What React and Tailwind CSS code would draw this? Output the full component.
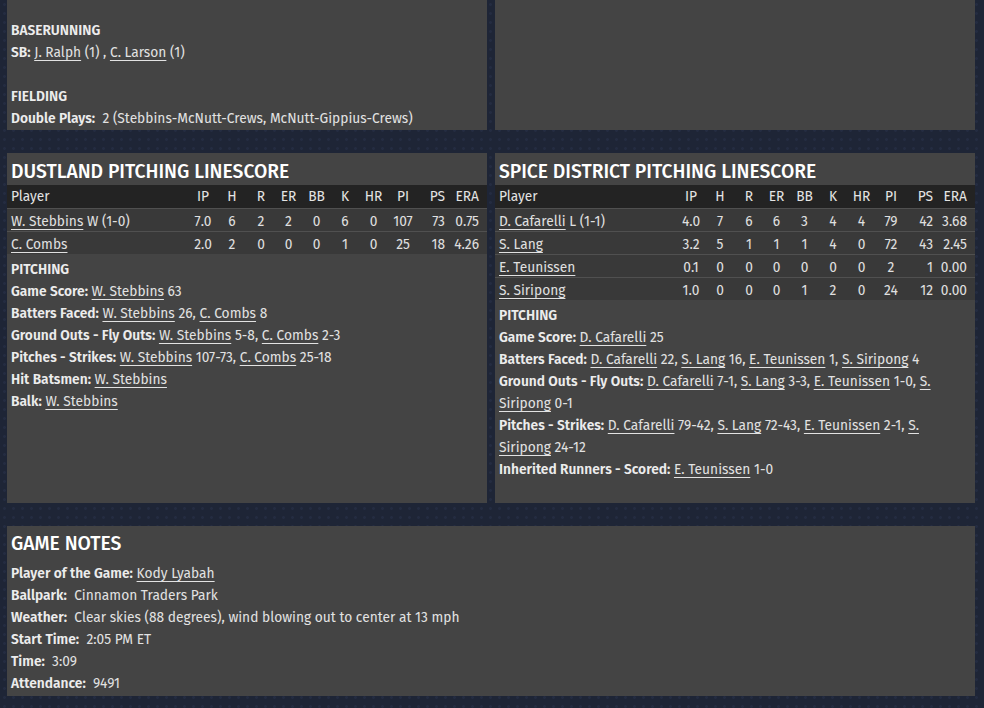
import React from 'react';

const cols = 'grid grid-cols-[1fr_28px_30px_28px_27px_29px_28px_29px_30px_29px_40px]';

const dustland = [
    { name: 'W. Stebbins', note: 'W (1-0)', s: ['7.0', '6', '2', '2', '0', '6', '0', '107', '73', '0.75'] },
    { name: 'C. Combs', note: '', s: ['2.0', '2', '0', '0', '0', '1', '0', '25', '18', '4.26'] },
];

const spice = [
    { name: 'D. Cafarelli', note: 'L (1-1)', s: ['4.0', '7', '6', '6', '3', '4', '4', '79', '42', '3.68'] },
    { name: 'S. Lang', note: '', s: ['3.2', '5', '1', '1', '1', '4', '0', '72', '43', '2.45'] },
    { name: 'E. Teunissen', note: '', s: ['0.1', '0', '0', '0', '0', '0', '0', '2', '1', '0.00'] },
    { name: 'S. Siripong', note: '', s: ['1.0', '0', '0', '0', '1', '2', '0', '24', '12', '0.00'] },
];

const heads = ['IP', 'H', 'R', 'ER', 'BB', 'K', 'HR', 'PI', 'PS', 'ERA'];

function A({ children }) {
    return <a className="underline underline-offset-[3px] decoration-1 cursor-pointer">{children}</a>;
}

function Line({ label, children }) {
    return (
        <div className="leading-[22px]">
            <span className="font-semibold text-[#ececec]">{label}</span>
            {children}
        </div>
    );
}

function cellClass(i) {
    // PS and ERA sit on the right, the rest are centered
    if (i === 8) return 'text-right pr-[2px]';
    if (i === 9) return 'text-right pr-[8px]';
    return 'text-center';
}

function Linescore({ title, rows, children }) {
    return (
        <div className="bg-[#444444] h-[350px] flex flex-col">
            <h2 className="h-[32px] px-[4px] pt-[6px] flex items-center text-[19.3px] font-medium text-white">{title}</h2>
            <div className={`${cols} bg-[#232323] h-[23px] pt-[2px] items-center text-[#e4e4e4]`}>
                <div className="pl-[4px]">Player</div>
                {heads.map((h, i) => (
                    <div key={h} className={cellClass(i)}>{h}</div>
                ))}
            </div>
            {rows.map((r) => (
                <div key={r.name} className={`${cols} bg-[#393939] h-[23px] pt-[3px] items-center border-t border-[#505050] last:border-b text-[#e0e0e0]`}>
                    <div className="pl-[4px] whitespace-nowrap">
                        <A>{r.name}</A>{r.note && ' ' + r.note}
                    </div>
                    {r.s.map((v, i) => (
                        <div key={i} className={cellClass(i)}>{v}</div>
                    ))}
                </div>
            ))}
            <div className="px-[4px] pt-[5px]">{children}</div>
        </div>
    );
}

export default function App() {
    return (
        <div
            className="min-h-[708px] bg-[#1e2536] bg-[radial-gradient(circle,#242c41_1.2px,transparent_1.6px)] bg-[length:9px_9px] pl-[7px] pr-[9px] text-[13.75px] text-[#e2e2e2]"
            style={{ fontFamily: '"Fira Sans", "Open Sans", "Noto Sans", sans-serif' }}
        >
            {/* Batting details (continued from above) */}
            <div className="grid grid-cols-2 gap-[8px]">
                <div className="bg-[#444444] h-[130px] px-[4px] pt-[20px]">
                    <div className="font-semibold leading-[22px] text-[#ececec]">BASERUNNING</div>
                    <Line label="SB:">
                        {' '}<A>J. Ralph</A> (1) , <A>C. Larson</A> (1)
                    </Line>
                    <div className="h-[22px]" />
                    <div className="font-semibold leading-[22px] text-[#ececec]">FIELDING</div>
                    <Line label="Double Plays:">
                        {'\u00a0 '}2 (Stebbins-McNutt-Crews, McNutt-Gippius-Crews)
                    </Line>
                </div>
                <div className="bg-[#444444] h-[130px]" />
            </div>

            {/* Pitching linescores */}
            <div className="grid grid-cols-2 gap-[8px] mt-[23px]">
                <Linescore title="DUSTLAND PITCHING LINESCORE" rows={dustland}>
                    <div className="font-semibold leading-[22px] text-[#ececec]">PITCHING</div>
                    <Line label="Game Score:"> <A>W. Stebbins</A> 63</Line>
                    <Line label="Batters Faced:"> <A>W. Stebbins</A> 26, <A>C. Combs</A> 8</Line>
                    <Line label="Ground Outs - Fly Outs:"> <A>W. Stebbins</A> 5-8, <A>C. Combs</A> 2-3</Line>
                    <Line label="Pitches - Strikes:"> <A>W. Stebbins</A> 107-73, <A>C. Combs</A> 25-18</Line>
                    <Line label="Hit Batsmen:"> <A>W. Stebbins</A></Line>
                    <Line label="Balk:"> <A>W. Stebbins</A></Line>
                </Linescore>
                <Linescore title="SPICE DISTRICT PITCHING LINESCORE" rows={spice}>
                    <div className="font-semibold leading-[22px] text-[#ececec]">PITCHING</div>
                    <Line label="Game Score:"> <A>D. Cafarelli</A> 25</Line>
                    <Line label="Batters Faced:"> <A>D. Cafarelli</A> 22, <A>S. Lang</A> 16, <A>E. Teunissen</A> 1, <A>S. Siripong</A> 4</Line>
                    <Line label="Ground Outs - Fly Outs:"> <A>D. Cafarelli</A> 7-1, <A>S. Lang</A> 3-3, <A>E. Teunissen</A> 1-0, <A>S. Siripong</A> 0-1</Line>
                    <Line label="Pitches - Strikes:"> <A>D. Cafarelli</A> 79-42, <A>S. Lang</A> 72-43, <A>E. Teunissen</A> 2-1, <A>S. Siripong</A> 24-12</Line>
                    <Line label="Inherited Runners - Scored:"> <A>E. Teunissen</A> 1-0</Line>
                </Linescore>
            </div>

            {/* Game notes */}
            <div className="bg-[#444444] mt-[23px] px-[4px] pt-[4px] pb-[1px]">
                <h2 className="h-[33px] pb-[4px] flex items-center text-[19.3px] font-medium text-white">GAME NOTES</h2>
                <Line label="Player of the Game:"> <A>Kody Lyabah</A></Line>
                <Line label="Ballpark:">{'\u00a0 '}Cinnamon Traders Park</Line>
                <Line label="Weather:">{'\u00a0 '}Clear skies (88 degrees), wind blowing out to center at 13 mph</Line>
                <Line label="Start Time:">{'\u00a0 '}2:05 PM ET</Line>
                <Line label="Time:">{'\u00a0 '}3:09</Line>
                <Line label="Attendance:">{'\u00a0 '}9491</Line>
            </div>
        </div>
    );
}
